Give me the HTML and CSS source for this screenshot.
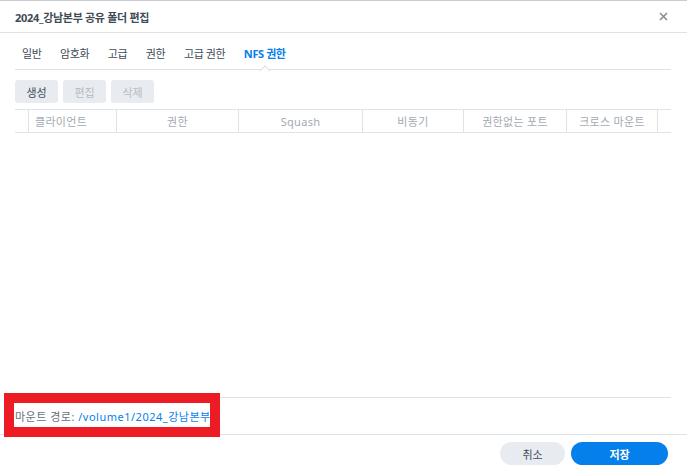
FILE: index.html
```html
<!DOCTYPE html>
<html lang="ko">
<head>
<meta charset="utf-8">
<link rel="stylesheet" href="styles.css">
</head>
<body>
<div class="dialog">
  <div class="header">
    <div class="title">2024_강남본부 공유 폴더 편집</div>
    <svg class="close" width="9" height="9" viewBox="0 0 9 9"><path d="M1 1L8 8M8 1L1 8" stroke="#8a8f96" stroke-width="1.6" fill="none"/></svg>
  </div>
  <div class="content">
    <div class="tabs">
      <span class="tab">일반</span>
      <span class="tab">암호화</span>
      <span class="tab">고급</span>
      <span class="tab">권한</span>
      <span class="tab">고급 권한</span>
      <span class="tab active">NFS 권한</span>
    </div>
    <div class="toolbar">
      <button class="btn">생성</button>
      <button class="btn disabled">편집</button>
      <button class="btn disabled">삭제</button>
    </div>
    <div class="grid-head">
      <div class="col c0"></div>
      <div class="col c1 left">클라이언트</div>
      <div class="col c2">권한</div>
      <div class="col c3">Squash</div>
      <div class="col c4">비동기</div>
      <div class="col c5">권한없는 포트</div>
      <div class="col c6">크로스 마운트</div>
      <div class="col c7"></div>
    </div>
    <div class="grid-body"></div>
    <div class="mount">마운트 경로: <span class="path">/volume1/2024_강남본부</span></div>
  </div>
  <div class="footer">
    <button class="pill cancel">취소</button>
    <button class="pill save">저장</button>
  </div>
  <div class="highlight"></div>
</div>
</body>
</html>
```
FILE: styles.css
```css
* { box-sizing: border-box; }
html, body { margin: 0; padding: 0; background: #fff; }
body {
  font-family: "Noto Sans", "Noto Sans CJK KR", sans-serif;
  font-size: 11px;
  color: #414b55;
}
.dialog {
  position: relative;
  width: 687px;
  height: 473px;
  display: flex;
  flex-direction: column;
  border-top: 1px solid #c9ccd0;
}
.header {
  height: 32px;
  border-bottom: 1px solid #dde3ea;
  display: flex;
  align-items: center;
  justify-content: space-between;
  padding: 0 19px 0 15px;
}
.title {
  font-weight: 700;
  font-size: 11px;
  color: #414b55;
  letter-spacing: -0.3px;
}
.content {
  flex: 1;
  display: flex;
  flex-direction: column;
  padding: 0 16px 0 15px;
}
.tabs {
  height: 37px;
  border-bottom: 1px solid #dde3ea;
  display: flex;
  align-items: center;
  padding: 4px 0 0 7px;
  gap: 18.6px;
}
.tab {
  position: relative;
  font-size: 11px;
  color: #414b55;
  letter-spacing: -0.4px;
}
.tab.active {
  color: #057feb;
  font-weight: 700;
}
.tab.active::after {
  content: "";
  position: absolute;
  left: 50%;
  bottom: -14px;
  width: 7px;
  height: 7px;
  margin-left: -4px;
  background: #fff;
  border-left: 1px solid #dde3ea;
  border-top: 1px solid #dde3ea;
  transform: rotate(45deg);
}
.toolbar {
  display: flex;
  gap: 5px;
  margin-top: 10px;
  height: 23px;
}
.btn {
  font-family: inherit;
  font-size: 11px;
  width: 43px;
  height: 23px;
  border: 0;
  border-radius: 3px;
  background: #e8ecf1;
  color: #414b55;
  padding: 0;
}
.btn.disabled { color: #b5bcc4; }
.grid-head {
  margin-top: 6px;
  height: 24px;
  border-top: 1px solid #dde3ea;
  border-bottom: 1px solid #dde3ea;
  display: flex;
}
.col {
  height: 100%;
  display: flex;
  align-items: center;
  justify-content: center;
  color: #a3aab2;
  font-size: 11px;
  border-right: 1px solid #dde3ea;
  letter-spacing: 0.3px;
}
.col.left { justify-content: flex-start; padding-left: 6px; }
.c0 { width: 14px; }
.c1 { width: 88px; }
.c2 { width: 122px; }
.c3 { width: 124px; }
.c4 { width: 101px; }
.c5 { width: 103px; }
.c6 { width: 91px; }
.c7 { width: 13px; border-right: 0; }
.grid-body { flex: 1; }
.mount {
  height: 37px;
  border-top: 1px solid #dde3ea;
  display: flex;
  align-items: center;
  color: #67717b;
  font-size: 11px;
  letter-spacing: 0.5px;
  white-space: pre;
}
.path { color: #057feb; }
.footer {
  height: 39px;
  border-top: 1px solid #dde3ea;
  display: flex;
  justify-content: flex-end;
  align-items: flex-start;
  gap: 6px;
  padding: 7px 19px 0 0;
}
.pill {
  font-family: inherit;
  font-size: 11px;
  height: 23px;
  border: 0;
  border-radius: 12px;
  padding: 0;
}
.cancel { width: 65px; background: #e8ecf1; color: #414b55; }
.save { width: 97px; background: #057feb; color: #fff; font-weight: 700; }
.highlight {
  position: absolute;
  left: 4px;
  top: 392px;
  width: 216px;
  height: 44px;
  border: 10px solid #ed1c24;
}
```
